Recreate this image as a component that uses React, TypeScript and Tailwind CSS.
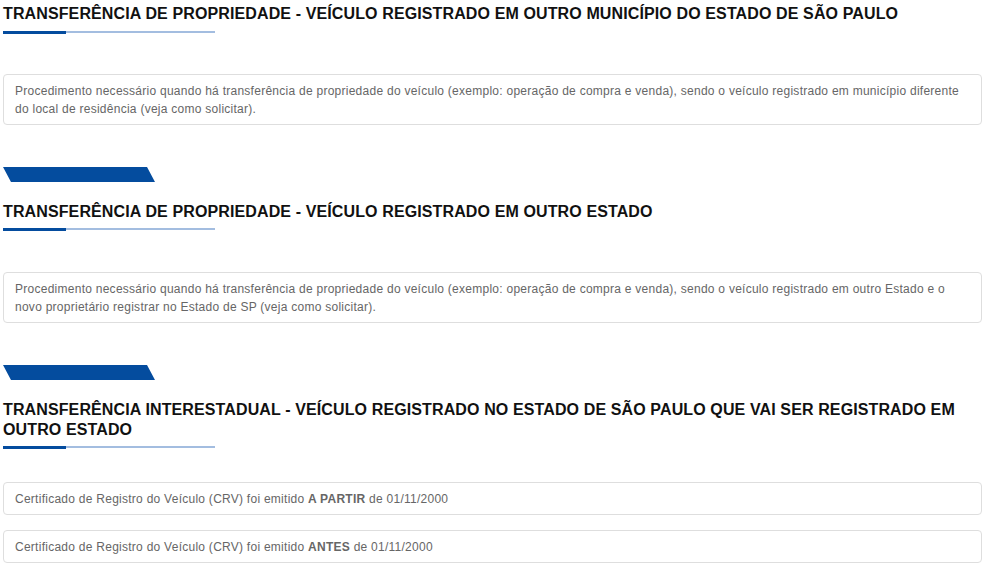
import React from "react";

// Slanted blue marker that separates the sections
const SectionBar: React.FC<{ className?: string }> = ({ className = "" }) => (
  <svg
    className={`block ${className}`}
    width="152"
    height="15"
    viewBox="0 0 152 15"
  >
    <polygon points="0,0 144,0 152,15 8,15" fill="#044c9e" />
  </svg>
);

// Two-tone underline below each title
const TitleRule: React.FC<{ className?: string }> = ({ className = "" }) => (
  <div className={`flex h-[3px] w-[212px] items-start ${className}`}>
    <div className="h-[3px] w-[63px] bg-[#044c9e]" />
    <div className="h-[2px] flex-1 bg-[#a3bde0]" />
  </div>
);

const Title: React.FC<{ children: React.ReactNode; className?: string }> = ({
  children,
  className = "",
}) => (
  <h2
    className={`text-[16px] font-bold leading-[20px] tracking-[0.12px] text-[#111] ${className}`}
  >
    {children}
  </h2>
);

const Card: React.FC<{ children: React.ReactNode; className?: string }> = ({
  children,
  className = "",
}) => (
  <div
    className={`rounded-[4px] border border-[#dedede] bg-white pb-[6px] pl-[11px] pr-[11px] pt-[7px] text-[12px] leading-[18px] tracking-[0.26px] text-[#666] ${className}`}
  >
    {children}
  </div>
);

export default function App() {
  return (
    <div
      className="min-h-screen bg-white pl-[3px] pr-[6px] pt-[4px]"
      style={{ fontFamily: '"Liberation Sans", Arial, sans-serif' }}
    >
      <section>
        <Title>
          TRANSFERÊNCIA DE PROPRIEDADE - VEÍCULO REGISTRADO EM OUTRO MUNICÍPIO
          DO ESTADO DE SÃO PAULO
        </Title>
        <TitleRule className="mt-[7px]" />
        <Card className="mt-[40px]">
          Procedimento necessário quando há transferência de propriedade do
          veículo (exemplo: operação de compra e venda), sendo o veículo
          registrado em município diferente do local de residência (veja como
          solicitar).
        </Card>
      </section>

      <section>
        <SectionBar className="mt-[42px]" />
        <Title className="mt-[20px]">
          TRANSFERÊNCIA DE PROPRIEDADE - VEÍCULO REGISTRADO EM OUTRO ESTADO
        </Title>
        <TitleRule className="mt-[6px]" />
        <Card className="mt-[41px]">
          Procedimento necessário quando há transferência de propriedade do
          veículo (exemplo: operação de compra e venda), sendo o veículo
          registrado em outro Estado e o novo proprietário registrar no Estado
          de SP (veja como solicitar).
        </Card>
      </section>

      <section>
        <SectionBar className="mt-[42px]" />
        <Title className="mt-[20px]">
          TRANSFERÊNCIA INTERESTADUAL - VEÍCULO REGISTRADO NO ESTADO DE SÃO
          PAULO QUE VAI SER REGISTRADO EM OUTRO ESTADO
        </Title>
        <TitleRule className="mt-[6px]" />
        <div className="mt-[33px] flex flex-col gap-[15px]">
          <Card>
            Certificado de Registro do Veículo (CRV) foi emitido{" "}
            <b>A PARTIR</b> de 01/11/2000
          </Card>
          <Card>
            Certificado de Registro do Veículo (CRV) foi emitido <b>ANTES</b>{" "}
            de 01/11/2000
          </Card>
        </div>
      </section>
    </div>
  );
}
